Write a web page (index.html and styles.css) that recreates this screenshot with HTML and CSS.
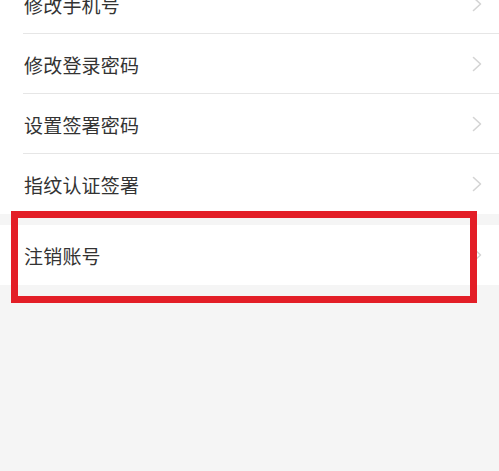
FILE: index.html
```html
<!DOCTYPE html>
<html lang="zh-CN">
<head>
<meta charset="utf-8">
<link rel="stylesheet" href="styles.css">
</head>
<body>
<div class="page">
  <div class="group group-top">
    <div class="row"><span class="label">修改手机号</span><svg class="chev" viewBox="0 0 10 16"><polyline points="1.5,1.5 8.5,8 1.5,14.5"/></svg></div>
    <div class="row"><span class="label">修改登录密码</span><svg class="chev" viewBox="0 0 10 16"><polyline points="1.5,1.5 8.5,8 1.5,14.5"/></svg></div>
    <div class="row"><span class="label">设置签署密码</span><svg class="chev" viewBox="0 0 10 16"><polyline points="1.5,1.5 8.5,8 1.5,14.5"/></svg></div>
    <div class="row last"><span class="label">指纹认证签署</span><svg class="chev" viewBox="0 0 10 16"><polyline points="1.5,1.5 8.5,8 1.5,14.5"/></svg></div>
  </div>
  <div class="group group-cancel">
    <div class="row last"><span class="label">注销账号</span><svg class="chev" viewBox="0 0 10 16"><polyline points="1.5,1.5 8.5,8 1.5,14.5"/></svg></div>
  </div>
  <div class="highlight"></div>
</div>
</body>
</html>
```

FILE: styles.css
```css
html, body {
  margin: 0;
  padding: 0;
  background: #f5f5f5;
  height: 100%;
  overflow: hidden;
}
.page {
  position: relative;
  display: flow-root;
  font-family: "Noto Sans CJK SC", "Noto Sans", sans-serif;
  color: #333333;
}
.group {
  background: #ffffff;
  display: flex;
  flex-direction: column;
}
.group-top {
  margin-top: -26px;
}
.group-cancel {
  margin-top: 11px;
}
.row {
  position: relative;
  height: 60px;
  display: flex;
  align-items: center;
  justify-content: space-between;
  padding: 0 17px 0 24px;
  box-sizing: border-box;
}
.row::after {
  content: "";
  position: absolute;
  left: 23px;
  right: 0;
  bottom: 0;
  height: 1px;
  background: #e6e6e6;
}
.row.last::after {
  display: none;
}
.label {
  font-size: 19px;
  line-height: 1;
  letter-spacing: 0.2px;
}
.chev {
  width: 10px;
  height: 16px;
  fill: none;
  stroke: #d4d4d4;
  stroke-width: 1.6;
  stroke-linecap: round;
  stroke-linejoin: round;
}
.highlight {
  position: absolute;
  left: 11px;
  top: 211px;
  width: 466px;
  height: 92px;
  box-sizing: border-box;
  border: 7px solid #e31e27;
}
```
